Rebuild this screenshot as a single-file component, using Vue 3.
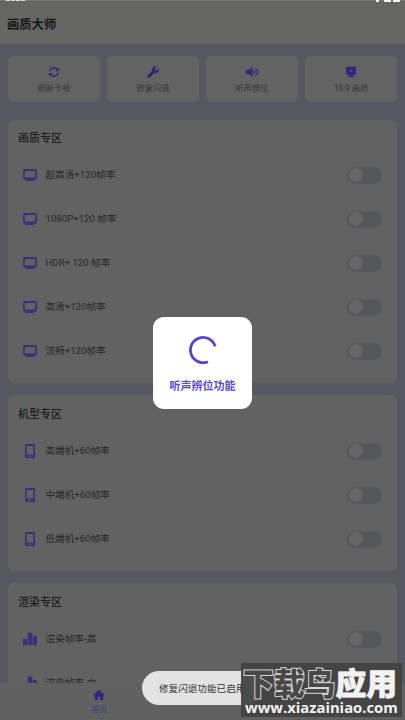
<script setup>
const tiles = [
  { icon: 'refresh', label: '刷新卡顿' },
  { icon: 'wrench', label: '修复闪退' },
  { icon: 'sound', label: '听声辨位' },
  { icon: 'screen', label: '16:9 画质' },
]
const sections = [
  { title: '画质专区', icon: 'monitor', rows: ['超高清+120帧率', '1080P+120 帧率', 'HDR+ 120 帧率', '高清+120帧率', '流畅+120帧率'] },
  { title: '机型专区', icon: 'phone', rows: ['高端机+60帧率', '中端机+60帧率', '低端机+60帧率'] },
  { title: '渲染专区', icon: 'bars', rows: ['渲染帧率-高', '渲染帧率-中'] },
]
</script>

<template>
  <div class="screen">
    <header class="header">
      <h1>画质大师</h1>
      <div class="status status-left"><i></i><i></i><i></i><i></i></div>
      <div class="status status-right"><i></i><i></i><i></i></div>
    </header>

    <main class="content">
      <div class="tiles">
        <div v-for="t in tiles" :key="t.icon" class="tile">
          <svg v-if="t.icon === 'refresh'" class="tile-icon" viewBox="0 0 12 12" fill="none" stroke="currentColor" stroke-width="1.4">
            <path d="M1.8 5.2A4.1 4.1 0 0 1 9.2 3.6M10.2 6.8A4.1 4.1 0 0 1 2.8 8.4" />
            <path d="M10.9 1.2V5H7.1ZM1.1 10.8V7H4.9Z" fill="currentColor" stroke="none" />
          </svg>
          <svg v-else-if="t.icon === 'wrench'" class="tile-icon" viewBox="0 0 512 512" fill="currentColor">
            <path d="M507 117c-2-9-14-12-20-5l-75 74-68-11-11-68 74-74c7-7 4-18-5-21-52-12-108 2-149 42-41 42-53 102-37 155L19 406c-25 25-25 66 0 91s66 25 91 0l196-196c53 17 113 5 157-38 40-40 54-96 44-146zM64 472a24 24 0 1 1 0-48 24 24 0 0 1 0 48z" />
          </svg>
          <svg v-else-if="t.icon === 'sound'" class="tile-icon wide" viewBox="0 0 13 12" fill="none" stroke="currentColor" stroke-width="1.2">
            <path d="M.3 3.7H3L6.7 1V11L3 8.3H.3Z" fill="currentColor" stroke="none" />
            <path d="M8 4.2Q9.4 6 8 7.8M9.4 2.4Q14.4 6 9.4 9.6" />
          </svg>
          <svg v-else class="tile-icon" viewBox="0 0 12 12" fill="currentColor">
            <path fill-rule="evenodd" d="M1 .8H11V8.8H7.5V9.8H9V11H3V9.8H4.5V8.8H1ZM5 3.4V6.2L7.4 4.8Z" />
          </svg>
          <span>{{ t.label }}</span>
        </div>
      </div>

      <section v-for="s in sections" :key="s.title" class="card" :class="s.icon">
        <h2>{{ s.title }}</h2>
        <div v-for="r in s.rows" :key="r" class="row">
          <svg v-if="s.icon === 'monitor'" class="row-icon" viewBox="0 0 16 16" fill="none" stroke="currentColor">
            <rect x="1.9" y="3" width="12.2" height="8.5" rx="1" stroke-width="1.8" />
            <path d="M3.5 13.1H12.5" stroke-width="1.8" />
          </svg>
          <svg v-else-if="s.icon === 'phone'" class="row-icon" viewBox="0 0 16 16" fill="currentColor">
            <path fill-rule="evenodd" d="M4.2 1H11.8Q13 1 13 2.2V13.8Q13 15 11.8 15H4.2Q3 15 3 13.8V2.2Q3 1 4.2 1ZM4.6 3V11.6H11.4V3ZM7 12.6V14H9V12.6Z" />
          </svg>
          <svg v-else class="row-icon" viewBox="0 0 16 16" fill="currentColor">
            <rect x="1" y="8" width="4.2" height="6.2" rx=".7" />
            <rect x="5.8" y="1.4" width="4.4" height="12.8" rx=".7" />
            <rect x="10.8" y="5" width="4.2" height="9.2" rx=".7" />
          </svg>
          <span class="row-label">{{ r }}</span>
          <span class="switch"><b></b></span>
        </div>
      </section>
    </main>

    <nav class="nav">
      <div class="nav-item">
        <svg viewBox="0 0 12 12" fill="currentColor"><path d="M6 .8 11.6 5.8 10.8 6.6 10.3 6.2V11H7.2V7.8H4.8V11H1.7V6.2L1.2 6.6.4 5.8Z" /></svg>
        <span>首页</span>
      </div>
    </nav>

    <div class="dialog">
      <svg viewBox="0 0 28 28" fill="none" stroke="#5646c6" stroke-width="2.8">
        <path d="M26.1 10.4A12.6 12.6 0 1 0 18.9 25.7" />
      </svg>
      <span>听声辨位功能</span>
    </div>

    <div class="toast">修复闪退功能已启用</div>

    <div class="mark">
      <div class="mark-name"><span class="outlined">下载鸟</span><span>应用</span></div>
      <div class="mark-url">www.xiazainiao.com</div>
    </div>
  </div>
</template>

<style>
body { background: #57575f; overflow: hidden; }
</style>

<style scoped>
.screen {
  position: relative;
  display: flex;
  flex-direction: column;
  width: 405px;
  height: 720px;
  overflow: hidden;
  background: #57575f;
  color: #2b2b2b;
  font-family: Roboto, "Noto Sans CJK SC", sans-serif;
}
h1, h2 { margin: 0; }
.header {
  display: flex;
  align-items: center;
  flex: none;
  box-sizing: border-box;
  height: 44px;
  padding: 5px 7px 0;
  background: #656564;
  border-top: 1px solid #777;
}
h1 { font-size: 12.3px; line-height: 18px; font-weight: 700; color: #171717; }
.status { position: absolute; top: 0; display: flex; gap: 2px; }
.status i { height: 1px; width: 4px; background: #ddd; }
.status-left { left: 6px; gap: 1px; }
.status-right { right: 5px; }
.status-right i { height: 2px; width: 7px; background: #f4f4f4; }
.status-right i:first-child { width: 3px; margin-right: 3px; }
.content {
  flex: 1;
  min-height: 0;
  overflow: hidden;
  display: flex;
  flex-direction: column;
  gap: 12px;
  padding: 12px 8px 0;
}
.tiles { display: grid; grid-template-columns: repeat(4, 1fr); gap: 7px; margin-bottom: 6.5px; }
.tile {
  display: flex;
  flex-direction: column;
  align-items: center;
  gap: 4.5px;
  box-sizing: border-box;
  height: 45.5px;
  padding-top: 9.5px;
  border-radius: 5px;
  background: #636363;
  font-size: 8.2px;
  line-height: 12px;
  color: #363636;
}
.tile-icon { width: 12px; height: 12px; color: #32257e; flex: none; }
.tile-icon.wide { width: 13px; }
.card { flex: none; padding: 10px 15px 10px 10px; border-radius: 6px; background: #626262; }
.card.monitor { padding-top: 9px; }
h2 { font-size: 11px; line-height: 19px; font-weight: 500; color: #1d1d1d; padding-bottom: 5px; }
.row { display: flex; align-items: center; height: 44px; padding-left: 4px; }
.row-icon { width: 16px; height: 16px; color: #37307a; }
.row-label { flex: 1; margin-left: 7.5px; font-size: 9.65px; line-height: 16px; color: #282828; }
.switch { box-sizing: border-box; width: 35.5px; height: 17px; padding: 1.5px 2px; border-radius: 9px; background: #55575a; }
.switch b { display: block; width: 14px; height: 14px; border-radius: 50%; background: #666667; }
.nav { flex: none; display: flex; box-sizing: border-box; height: 37px; background: #616161; }
.nav-item { display: flex; flex-direction: column; align-items: center; width: 198px; padding-top: 6px; font-size: 8px; line-height: 12px; gap: 3px; color: #3c407b; }
.nav-item svg { width: 12px; height: 12px; color: #32257e; }
.dialog {
  position: absolute;
  left: 153px;
  top: 317px;
  display: flex;
  flex-direction: column;
  align-items: center;
  box-sizing: border-box;
  width: 99px;
  height: 92px;
  padding-top: 19px;
  border-radius: 11px;
  background: #fff;
  color: #5b4bd0;
  font-size: 11px;
  line-height: 16px;
  font-weight: 700;
}
.dialog svg { width: 28px; height: 28px; margin-bottom: 15px; }
.toast {
  position: absolute;
  left: 142px;
  top: 671px;
  box-sizing: border-box;
  width: 119px;
  height: 34px;
  padding-left: 17px;
  border-radius: 17px;
  background: #e3e3e3;
  color: #333;
  font-size: 9.6px;
  line-height: 35px;
  white-space: nowrap;
}
.mark {
  position: absolute;
  left: 241px;
  top: 663px;
  box-sizing: border-box;
  width: 161px;
  height: 54px;
  padding: 4px 0 0 2px;
  background: rgba(66, 66, 66, .94);
  color: #f2f2f2;
  white-space: nowrap;
}
.mark-name { height: 33px; font-family: "Noto Sans CJK SC", sans-serif; font-size: 30.8px; line-height: 30px; font-weight: 900; -webkit-text-stroke: .8px #f2f2f2; }
.outlined { color: #484848; -webkit-text-stroke: 2px #d8d8d8; paint-order: stroke fill; }
.mark-url { padding-left: 2px; font-family: "Open Sans", sans-serif; font-size: 14.8px; line-height: 14px; font-weight: 700; }
</style>
